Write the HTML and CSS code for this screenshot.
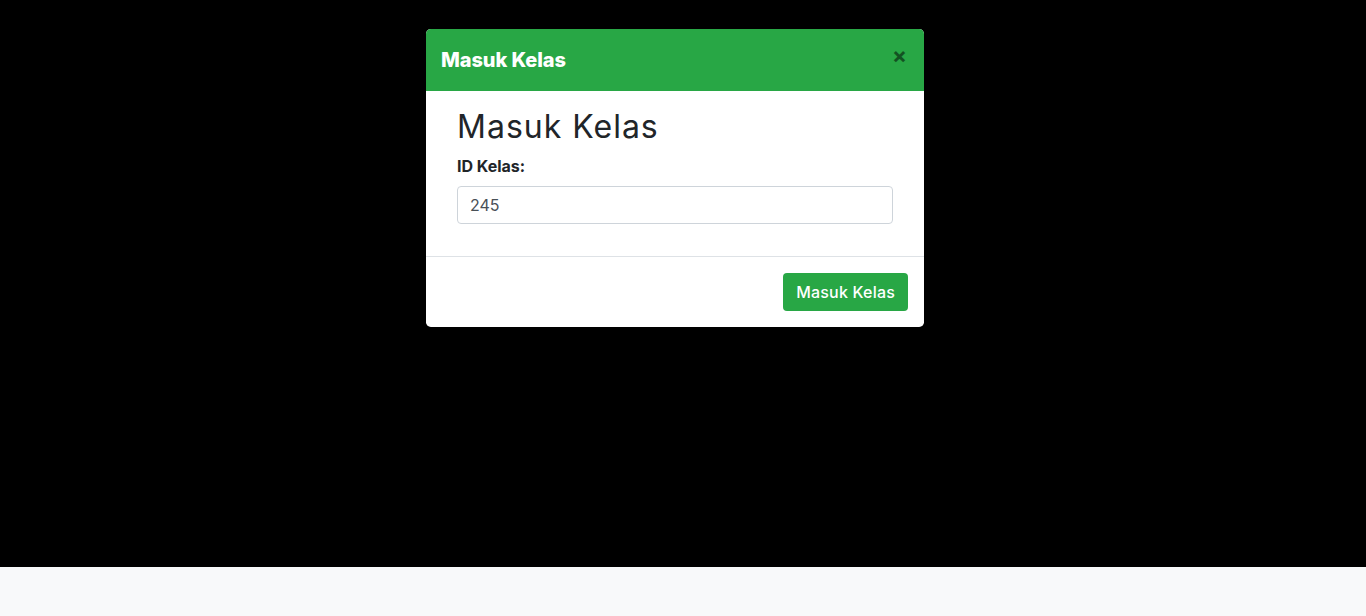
FILE: index.html
```html
<!DOCTYPE html>
<html lang="id">
<head>
  <meta charset="UTF-8" />
  <title>Masuk Kelas</title>
  <meta name="viewport" content="width=device-width, initial-scale=1" />
  <link rel="stylesheet" href="styles.css">
</head>
<body>
  <div class="backdrop">
    <div class="modal">
      <div class="modal-header">
        <h5 class="modal-title">Masuk Kelas</h5>
        <button type="button" class="close">&times;</button>
      </div>
      <form class="modal-body">
        <div class="container">
          <h2>Masuk Kelas</h2>
          <div class="form-group">
            <label for="idKelas">ID Kelas:</label>
            <input type="text" id="idKelas" name="idKelas" value="245">
          </div>
        </div>
      </form>
      <div class="modal-footer">
        <button type="submit" class="btn-success">Masuk Kelas</button>
      </div>
    </div>
  </div>
</body>
</html>
```

FILE: styles.css
```css
body {
  margin: 0;
  font-family: Inter, sans-serif;
  color: #212529;
  background: #f8f9fa;
  height: 616px;
}
.backdrop {
  background: #000;
  height: 567px;
  padding: 29px 16px 0 0;
  box-sizing: border-box;
}
.modal {
  width: 498px;
  margin: 0 auto;
  background: white;
  border-radius: 4.8px;
  overflow: hidden;
}
.modal-header {
  display: flex;
  align-items: flex-start;
  background: #28a745;
  padding: 16px 16px 16px 15px;
  height: 62px;
  box-sizing: border-box;
}
.modal-title {
  margin: 0;
  color: white;
  font-size: 20px;
  font-weight: 800;
  line-height: 30px;
  letter-spacing: -0.1px;
}
.close {
  margin: -2px 0 0 auto;
  background: none;
  border: none;
  padding: 0 1px 0 0;
  font-family: Inter, sans-serif;
  font-size: 22px;
  font-weight: 700;
  line-height: 24px;
  color: #000;
  opacity: 0.5;
  cursor: pointer;
}
.modal-body {
  padding: 16px 31px 16px 31px;
  border-bottom: 1px solid #dee2e6;
}
h2 {
  margin: 0 0 8px;
  padding-top: 1px;
  font-size: 32px;
  font-weight: 400;
  line-height: 38.4px;
  letter-spacing: 1px;
}
label {
  display: block;
  margin-bottom: 8px;
  font-size: 16px;
  font-weight: 700;
  line-height: 24px;
}
.form-group {
  margin-bottom: 16px;
}
input {
  display: block;
  width: 100%;
  box-sizing: border-box;
  height: 38px;
  padding: 6px 12px;
  font-family: Inter, sans-serif;
  font-size: 16px;
  color: #495057;
  border: 1px solid #ced4da;
  border-radius: 4px;
}
.modal-footer {
  display: flex;
  justify-content: flex-end;
  padding: 16px;
}
.btn-success {
  height: 38px;
  padding: 6px 13px;
  background: #28a745;
  color: white;
  font-family: Inter, sans-serif;
  font-size: 16px;
  font-weight: 500;
  letter-spacing: 0.2px;
  border: none;
  border-radius: 4px;
  cursor: pointer;
}
```
